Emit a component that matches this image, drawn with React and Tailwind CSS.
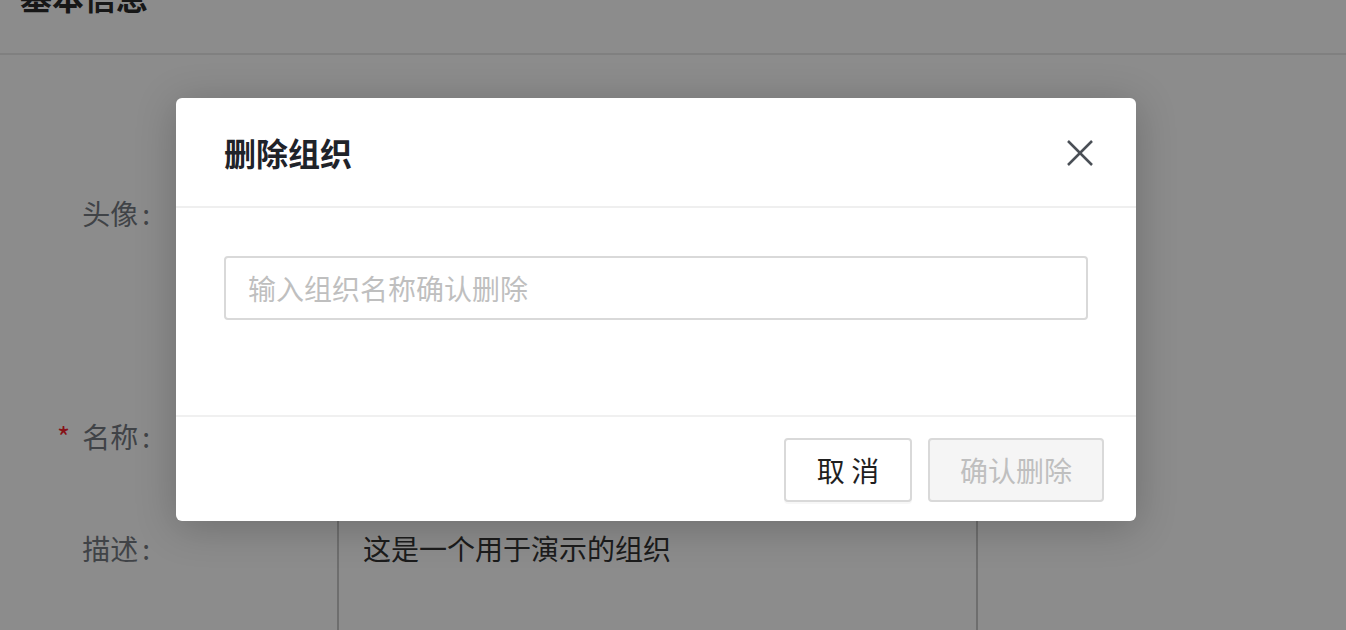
import React from "react";

const font = { fontFamily: '"Noto Sans CJK SC", "Noto Sans", sans-serif' };

export default function App() {
  return (
    <div
      className="relative w-[1346px] h-[630px] overflow-hidden bg-white text-[#333]"
      style={font}
    >
      {/* Page underneath */}
      <div className="flex h-[55px] border-b-2 border-[#e9e9e9] px-5">
        <h2 className="-mt-[20px] text-[32px] leading-8 font-bold text-[#2b2b2b]">基本信息</h2>
      </div>

      <div className="flex flex-col">
        {/* Avatar row */}
        <div className="mt-[78px] flex h-[160px] items-center">
          <div className="w-[150px] text-right text-[28px] leading-10 text-[#757a82]">
            头像<span className="ml-1">:</span>
          </div>
          <div className="ml-[189px] h-[160px] w-[160px] rounded-full bg-[#e6f0ff]" />
        </div>

        {/* Name row */}
        <div className="mt-[111px] flex h-[64px] items-center">
          <div className="w-[150px] text-right text-[28px] leading-10 text-[#757a82]">
            <span className="mr-3 text-[#f5222d]">*</span>名称<span className="ml-1">:</span>
          </div>
          <div className="ml-[189px] flex h-[64px] w-[640px] items-center rounded border-2 border-[#d9d9d9] px-[24px] text-[28px]">
            演示组织
          </div>
        </div>

        {/* Description row */}
        <div className="mt-[49px] flex items-start">
          <div className="mt-[11px] w-[150px] text-right text-[28px] leading-10 text-[#757a82]">
            描述<span className="ml-1">:</span>
          </div>
          <div className="ml-[187px] h-[200px] w-[641px] rounded border-2 border-[#c8c8c8] px-[24px] pt-[9px] text-[28px] leading-10 text-[#333]">
            这是一个用于演示的组织
          </div>
        </div>
      </div>

      {/* Overlay */}
      <div className="absolute inset-0 bg-black/45" />

      {/* Modal */}
      <div className="absolute left-[176px] top-[98px] w-[960px] rounded-[6px] bg-white shadow-[0_6px_40px_rgba(0,0,0,0.22)]">
        <div className="flex h-[110px] items-center justify-between border-b-2 border-[#efefef] pl-12 pr-[43px]">
          <h3 className="text-[32px] font-bold leading-10 text-[#1f2329]">删除组织</h3>
          <svg width="26" height="26" viewBox="0 0 26 26" fill="none" stroke="#4a4f56" strokeWidth="2.5" className="mt-[2px]">
            <line x1="1" y1="1" x2="25" y2="25" />
            <line x1="25" y1="1" x2="1" y2="25" />
          </svg>
        </div>

        <div className="px-12 pt-12 pb-[95px]">
          <div className="flex h-[64px] items-center rounded border-2 border-[#d9d9d9] px-[22px] text-[28px] text-[#bfbfbf]">
            输入组织名称确认删除
          </div>
        </div>

        <div className="flex items-center justify-end gap-4 border-t-2 border-[#f0f0f0] pt-[21px] pb-[19px] pr-8">
          <button className="flex h-[64px] w-[128px] items-center justify-center rounded border-2 border-[#d9d9d9] bg-white text-[28px] text-[#1f1f1f] shadow-[0_2px_0_rgba(0,0,0,0.03)]">
            取 消
          </button>
          <button className="flex h-[64px] w-[176px] items-center justify-center rounded border-2 border-[#d9d9d9] bg-[#f5f5f5] text-[28px] text-[#bfbfbf]">
            确认删除
          </button>
        </div>
      </div>
    </div>
  );
}
